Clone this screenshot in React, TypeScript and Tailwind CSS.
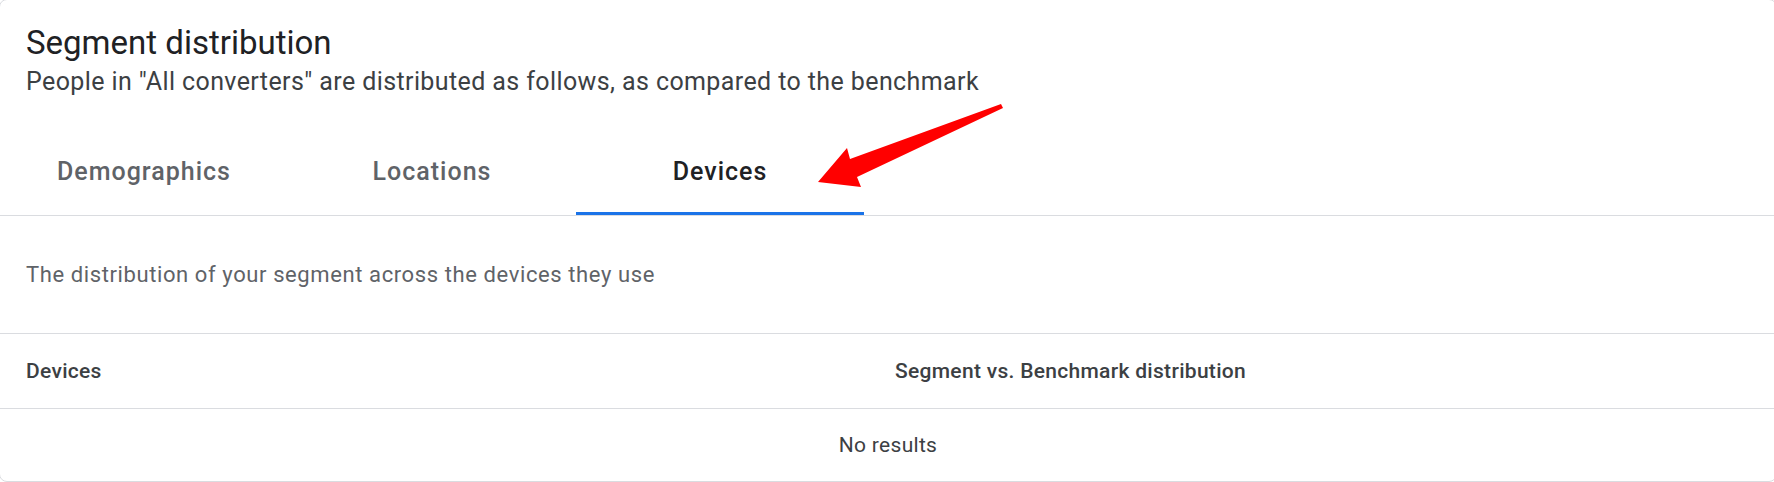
import { useState } from "react";

const TABS = ["Demographics", "Locations", "Devices"];

function RedArrow() {
  // annotation arrow drawn over the card
  return (
    <svg
      className="absolute left-0 top-0 pointer-events-none"
      width="1774"
      height="482"
      viewBox="0 0 1774 482"
    >
      <polygon
        points="1001,104 1003,108 857,177 861,187 818,182 847,148 850,159"
        fill="#ff0000"
      />
    </svg>
  );
}

export default function App() {
  const [active, setActive] = useState(2);

  return (
    <div className="relative w-[1774px] h-[482px] overflow-hidden bg-white font-['Roboto',sans-serif]">
      <div className="-ml-px -mt-px w-[1778px] border border-[#dadce0] rounded-lg bg-white">
        {/* Header */}
        <div className="px-[26px] pt-[23px]">
          <h2 className="text-[33px] leading-[40px] text-[#202124]">Segment distribution</h2>
          <p className="mt-[5px] text-[25px] leading-[28px] tracking-[0.4px] text-[#3c4043]">
            People in "All converters" are distributed as follows, as compared to the benchmark
          </p>
        </div>

        {/* Tabs */}
        <div className="flex border-b border-[#dadce0]">
          {TABS.map((tab, i) => (
            <button
              key={tab}
              onClick={() => setActive(i)}
              className="w-[288px] flex flex-col items-center"
            >
              <span
                className={`pt-[62px] pb-[26px] text-[25px] leading-[28px] font-medium tracking-[1px] ${
                  active === i ? "text-[#202124]" : "text-[#5f6368]"
                }`}
              >
                {tab}
              </span>
              <span className={`h-[3px] w-full ${active === i ? "bg-[#1a73e8]" : "bg-transparent"}`} />
            </button>
          ))}
        </div>

        {/* Description */}
        <div className="px-[26px] pt-[45px] pb-[44px] text-[22px] leading-[28px] tracking-[0.6px] text-[#5f6368]">
          The distribution of your segment across the devices they use
        </div>

        {/* Table */}
        <div className="border-t border-[#dadce0]">
          <div className="grid grid-cols-[869px_1fr] h-[75px] border-b border-[#dadce0] items-center text-[21px] leading-[28px] font-medium tracking-[0.3px] text-[#3c4043]">
            <div className="px-[26px]">Devices</div>
            <div className="px-[26px]">Segment vs. Benchmark distribution</div>
          </div>
          <div className="h-[72px] w-[1776px] flex items-center justify-center text-[21px] leading-[28px] tracking-[0.3px] text-[#3c4043]">
            <span>No results</span>
          </div>
        </div>
      </div>
      <RedArrow />
    </div>
  );
}
